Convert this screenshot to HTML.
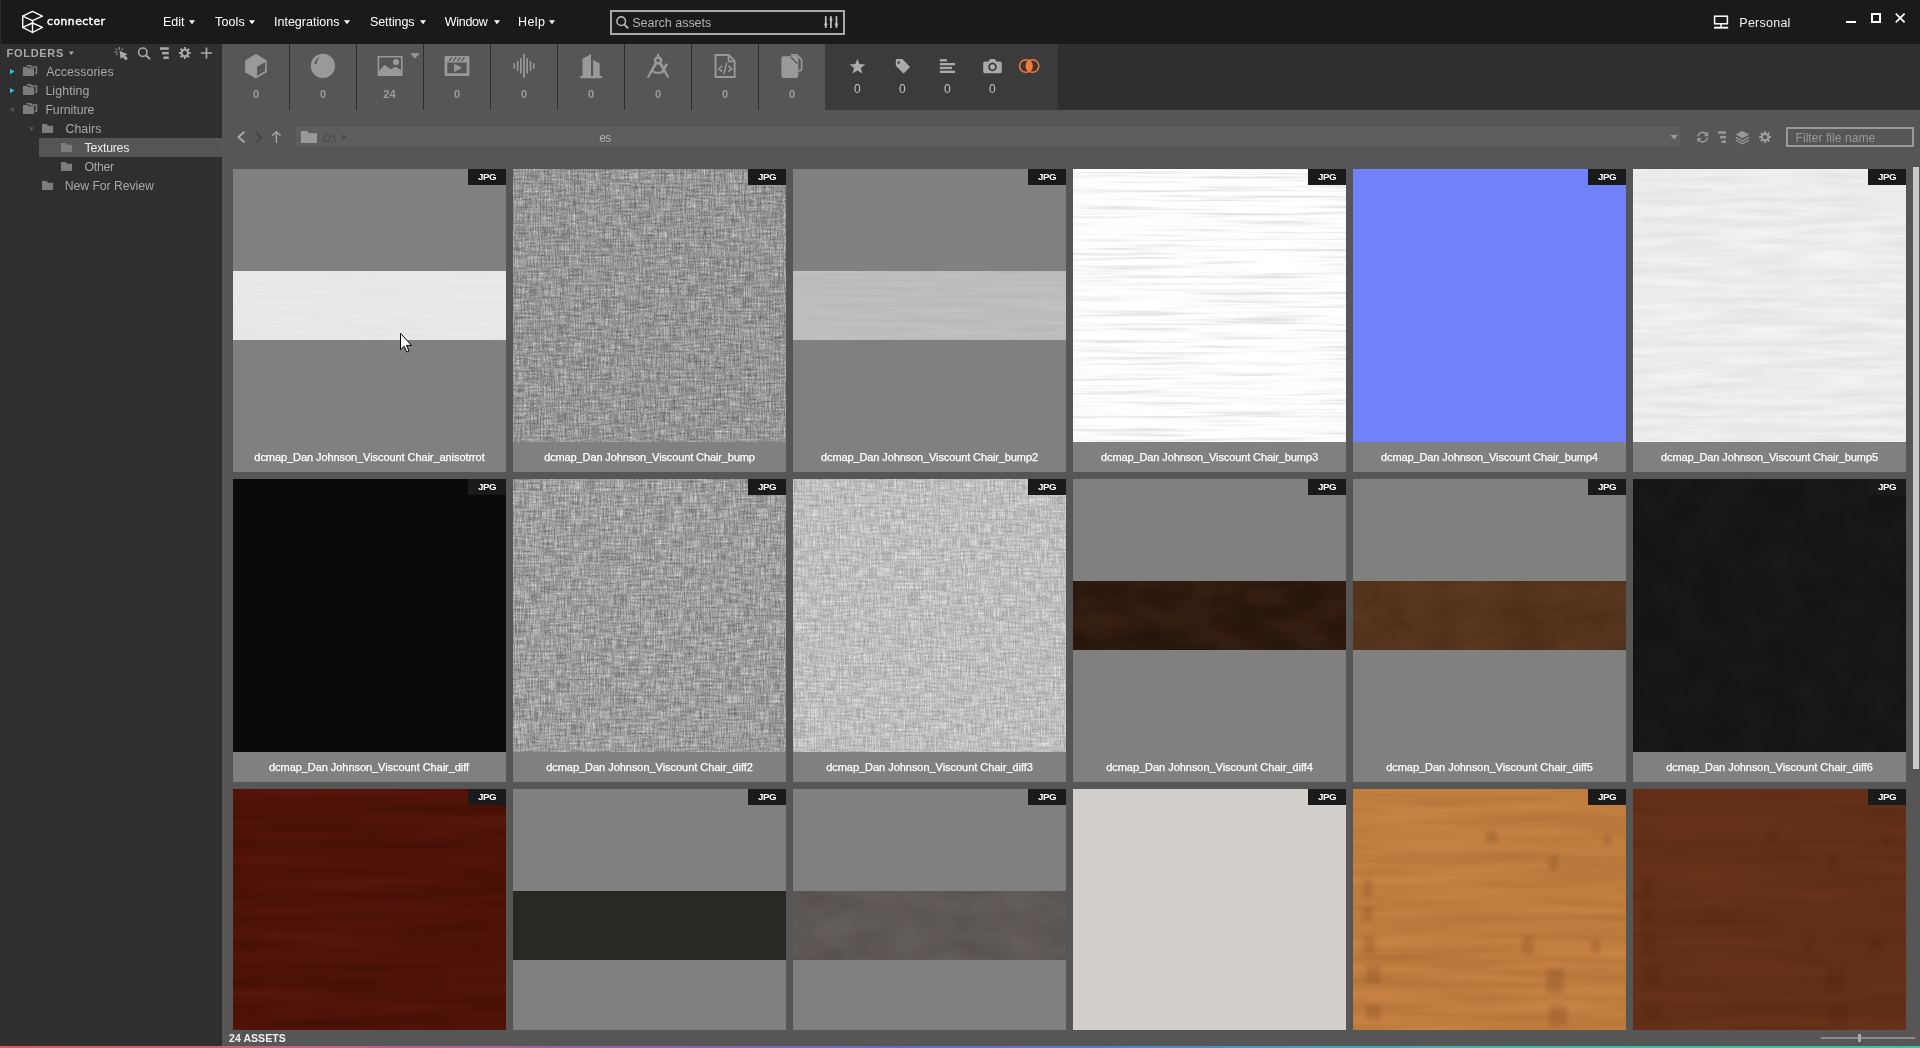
<!DOCTYPE html>
<html><head><meta charset="utf-8"><title>connecter</title><style>
*{margin:0;padding:0;box-sizing:border-box}
html,body{width:1920px;height:1048px;overflow:hidden;background:#565656;font-family:"Liberation Sans",sans-serif;color:#fff}
.a{position:absolute}
.t{position:absolute;white-space:nowrap;line-height:1}
#wrap{position:absolute;left:0;top:0;width:1920px;height:1048px;overflow:hidden;will-change:transform}
#top{left:0;top:0;width:1920px;height:44px;background:#1a1a1a}
#edge{left:0;top:0;width:1px;height:1046px;background:#2c2c2c}
#side{left:0;top:44px;width:222px;height:1002px;background:#2f2f2f}
#sel{left:39px;top:138px;width:183px;height:19px;background:#555}
#cats{left:222px;top:44px;width:603px;height:66px;background:#565656}
#filt{left:825px;top:44px;width:233px;height:66px;background:#3b3b3b}
#dark{left:1058px;top:44px;width:862px;height:66px;background:#2f2f2f}
.sep{position:absolute;top:44px;width:1px;height:66px;background:#2e2e2e}
#path{left:296px;top:127px;width:1384px;height:20px;background:#5d5d5d}
#fbox{left:1786px;top:127px;width:128px;height:20px;border:2px solid #9a9a9a;background:#565656}
#sb{left:1913px;top:167px;width:6px;height:602px;background:#c8c8c8}
.tile{position:absolute;width:273px;height:303px;background:#808080;overflow:hidden}
.tile .im{position:absolute;left:0;top:0;width:273px;height:273px}
.tile .band{position:absolute;left:0;top:102px;width:273px;height:69px}
.tile .bd{position:absolute;right:0;top:0;width:38px;height:16px;background:#1a1a1a}
.tile .lb{position:absolute;left:0;top:273px;width:273px;height:30px;background:#808080}
#grid{left:222px;top:110px;width:1698px;height:920px;overflow:hidden}
#status{left:222px;top:1030px;width:1698px;height:16px;background:#565656}
#grad{left:0;top:1046px;width:1920px;height:2px;background:linear-gradient(90deg,#f05060 0%,#d85a80 16%,#9060b0 33%,#6068d0 47%,#4a80d8 57%,#38a0c8 67%,#28c0b0 78%,#20d0a0 100%)}
</style></head><body>
<div id="wrap">
<svg width="0" height="0" style="position:absolute"><defs>
<filter id="fab1" x="0" y="0" width="100%" height="100%" color-interpolation-filters="sRGB">
<feTurbulence type="fractalNoise" baseFrequency="0.8 0.07" numOctaves="1" seed="3"/><feColorMatrix type="matrix" values="1 0 0 0 0  1 0 0 0 0  1 0 0 0 0  0 0 0 0 1" result="v"/>
<feTurbulence type="fractalNoise" baseFrequency="0.07 0.5" numOctaves="1" seed="8"/><feColorMatrix type="matrix" values="1 0 0 0 0  1 0 0 0 0  1 0 0 0 0  0 0 0 0 1" result="h"/>
<feTurbulence type="fractalNoise" baseFrequency="0.7 0.5" numOctaves="1" seed="5"/><feColorMatrix type="matrix" values="1 0 0 0 0  1 0 0 0 0  1 0 0 0 0  0 0 0 0 1" result="p"/>
<feComposite in="v" in2="h" operator="arithmetic" k1="0.6" k2="0.4" k3="0.3" k4="0" result="vh"/>
<feComposite in="vh" in2="p" operator="arithmetic" k1="0" k2="0.65" k3="0.35" k4="0"/>
<feColorMatrix type="matrix" values="0.85 0 0 0 0.160  0.85 0 0 0 0.160  0.85 0 0 0 0.160  0 0 0 0 1"/>
</filter>
<filter id="fab2" x="0" y="0" width="100%" height="100%" color-interpolation-filters="sRGB">
<feTurbulence type="fractalNoise" baseFrequency="0.8 0.07" numOctaves="1" seed="11"/><feColorMatrix type="matrix" values="1 0 0 0 0  1 0 0 0 0  1 0 0 0 0  0 0 0 0 1" result="v"/>
<feTurbulence type="fractalNoise" baseFrequency="0.07 0.5" numOctaves="1" seed="16"/><feColorMatrix type="matrix" values="1 0 0 0 0  1 0 0 0 0  1 0 0 0 0  0 0 0 0 1" result="h"/>
<feTurbulence type="fractalNoise" baseFrequency="0.7 0.5" numOctaves="1" seed="13"/><feColorMatrix type="matrix" values="1 0 0 0 0  1 0 0 0 0  1 0 0 0 0  0 0 0 0 1" result="p"/>
<feComposite in="v" in2="h" operator="arithmetic" k1="0.6" k2="0.4" k3="0.3" k4="0" result="vh"/>
<feComposite in="vh" in2="p" operator="arithmetic" k1="0" k2="0.65" k3="0.35" k4="0"/>
<feColorMatrix type="matrix" values="0.85 0 0 0 0.190  0.85 0 0 0 0.190  0.85 0 0 0 0.190  0 0 0 0 1"/>
</filter>
<filter id="fab3" x="0" y="0" width="100%" height="100%" color-interpolation-filters="sRGB">
<feTurbulence type="fractalNoise" baseFrequency="0.8 0.07" numOctaves="1" seed="23"/><feColorMatrix type="matrix" values="1 0 0 0 0  1 0 0 0 0  1 0 0 0 0  0 0 0 0 1" result="v"/>
<feTurbulence type="fractalNoise" baseFrequency="0.07 0.5" numOctaves="1" seed="28"/><feColorMatrix type="matrix" values="1 0 0 0 0  1 0 0 0 0  1 0 0 0 0  0 0 0 0 1" result="h"/>
<feTurbulence type="fractalNoise" baseFrequency="0.7 0.5" numOctaves="1" seed="25"/><feColorMatrix type="matrix" values="1 0 0 0 0  1 0 0 0 0  1 0 0 0 0  0 0 0 0 1" result="p"/>
<feComposite in="v" in2="h" operator="arithmetic" k1="0.6" k2="0.4" k3="0.3" k4="0" result="vh"/>
<feComposite in="vh" in2="p" operator="arithmetic" k1="0" k2="0.65" k3="0.35" k4="0"/>
<feColorMatrix type="matrix" values="0.62 0 0 0 0.435  0.62 0 0 0 0.435  0.62 0 0 0 0.435  0 0 0 0 1"/>
</filter>
<filter id="wl2" x="0" y="0" width="100%" height="100%" color-interpolation-filters="sRGB">
<feTurbulence type="fractalNoise" baseFrequency="0.01 0.25" numOctaves="3" seed="4"/>
<feColorMatrix type="matrix" values="0.06 0 0 0 0.711  0.06 0 0 0 0.711  0.06 0 0 0 0.711  0 0 0 0 1"/>
</filter>
<filter id="wl1" x="0" y="0" width="100%" height="100%" color-interpolation-filters="sRGB">
<feTurbulence type="fractalNoise" baseFrequency="0.01 0.25" numOctaves="3" seed="21"/>
<feColorMatrix type="matrix" values="0.035 0 0 0 0.892  0.035 0 0 0 0.892  0.035 0 0 0 0.892  0 0 0 0 1"/>
</filter>
<filter id="wl3" x="0" y="0" width="100%" height="100%" color-interpolation-filters="sRGB">
<feTurbulence type="fractalNoise" baseFrequency="0.008 0.3" numOctaves="3" seed="9"/>
<feColorMatrix type="matrix" values="1 0 0 0 0  1 0 0 0 0  1 0 0 0 0  0 0 0 0 1"/>
<feComponentTransfer><feFuncR type="table" tableValues="1 1 1 1 1 0.99 0.96 0.92 0.89 0.89 0.89"/><feFuncG type="table" tableValues="1 1 1 1 1 0.99 0.96 0.92 0.89 0.89 0.89"/><feFuncB type="table" tableValues="1 1 1 1 1 0.99 0.96 0.92 0.89 0.89 0.89"/></feComponentTransfer>
</filter>
<filter id="wl5" x="0" y="0" width="100%" height="100%" color-interpolation-filters="sRGB">
<feTurbulence type="fractalNoise" baseFrequency="0.012 0.14" numOctaves="3" seed="14"/>
<feColorMatrix type="matrix" values="0.1 0 0 0 0.875  0.1 0 0 0 0.875  0.1 0 0 0 0.875  0 0 0 0 1"/>
</filter>
<filter id="lth1" x="0" y="0" width="100%" height="100%" color-interpolation-filters="sRGB">
<feTurbulence type="fractalNoise" baseFrequency="0.02 0.04" numOctaves="4" seed="2"/>
<feColorMatrix type="matrix" values="0.1 0 0 0 0.130  0.07 0 0 0 0.067  0.04 0 0 0 0.035  0 0 0 0 1"/>
</filter>
<filter id="lth2" x="0" y="0" width="100%" height="100%" color-interpolation-filters="sRGB">
<feTurbulence type="fractalNoise" baseFrequency="0.02 0.04" numOctaves="4" seed="6"/>
<feColorMatrix type="matrix" values="0.08 0 0 0 0.293  0.06 0 0 0 0.170  0.04 0 0 0 0.090  0 0 0 0 1"/>
</filter>
<filter id="lth3" x="0" y="0" width="100%" height="100%" color-interpolation-filters="sRGB">
<feTurbulence type="fractalNoise" baseFrequency="0.02 0.04" numOctaves="4" seed="16"/>
<feColorMatrix type="matrix" values="0.08 0 0 0 0.329  0.08 0 0 0 0.305  0.08 0 0 0 0.297  0 0 0 0 1"/>
</filter>
<filter id="dk" x="0" y="0" width="100%" height="100%" color-interpolation-filters="sRGB">
<feTurbulence type="fractalNoise" baseFrequency="0.03 0.03" numOctaves="3" seed="12"/>
<feColorMatrix type="matrix" values="0.03 0 0 0 0.071  0.03 0 0 0 0.071  0.03 0 0 0 0.071  0 0 0 0 1"/>
</filter>
<filter id="wd1" x="0" y="0" width="100%" height="100%" color-interpolation-filters="sRGB">
<feTurbulence type="fractalNoise" baseFrequency="0.006 0.08" numOctaves="2" seed="5"/>
<feColorMatrix type="matrix" values="0.1 0 0 0 0.256  0.04 0 0 0 0.051  0.03 0 0 0 0.016  0 0 0 0 1"/>
</filter>
<filter id="wd2" x="0" y="0" width="100%" height="100%" color-interpolation-filters="sRGB">
<feTurbulence type="fractalNoise" baseFrequency="0.006 0.08" numOctaves="2" seed="7"/>
<feColorMatrix type="matrix" values="0.12 0 0 0 0.689  0.11 0 0 0 0.431  0.08 0 0 0 0.207  0 0 0 0 1"/>
</filter>
<filter id="wd3" x="0" y="0" width="100%" height="100%" color-interpolation-filters="sRGB">
<feTurbulence type="fractalNoise" baseFrequency="0.006 0.08" numOctaves="2" seed="13"/>
<feColorMatrix type="matrix" values="0.08 0 0 0 0.348  0.05 0 0 0 0.159  0.04 0 0 0 0.070  0 0 0 0 1"/>
</filter>
<filter id="bl" x="-20%" y="-20%" width="140%" height="140%"><feGaussianBlur stdDeviation="2"/></filter>
</defs></svg>
<div class="a" id="top"></div>
<div class="a" id="side"></div>
<div class="a" id="edge"></div>
<div class="a" id="sel"></div>
<div class="a" id="cats"></div><div class="a" id="filt"></div><div class="a" id="dark"></div>
<div class="sep" style="left:289px"></div>
<div class="sep" style="left:356px"></div>
<div class="sep" style="left:423px"></div>
<div class="sep" style="left:490px"></div>
<div class="sep" style="left:557px"></div>
<div class="sep" style="left:624px"></div>
<div class="sep" style="left:691px"></div>
<div class="sep" style="left:758px"></div>
<div class="a" id="path"></div><div class="a" id="fbox"></div>
<svg class="a" style="left:189.2px;top:20px" width="6" height="5"><path d="M0 .3h6L3 4.3z" fill="#fff"/></svg>
<svg class="a" style="left:249.4px;top:20px" width="6" height="5"><path d="M0 .3h6L3 4.3z" fill="#fff"/></svg>
<svg class="a" style="left:344.4px;top:20px" width="6" height="5"><path d="M0 .3h6L3 4.3z" fill="#fff"/></svg>
<svg class="a" style="left:419.5px;top:20px" width="6" height="5"><path d="M0 .3h6L3 4.3z" fill="#fff"/></svg>
<svg class="a" style="left:493.5px;top:20px" width="6" height="5"><path d="M0 .3h6L3 4.3z" fill="#fff"/></svg>
<svg class="a" style="left:549.3px;top:20px" width="6" height="5"><path d="M0 .3h6L3 4.3z" fill="#fff"/></svg>
<div class="a" style="left:610px;top:10px;width:235px;height:25px;border:2px solid #a8a8a8"></div>
<div class="a" id="grid">
<div class="tile" style="left:11px;top:59px"><div class="band" style="background:#e8e8e8"><svg width="273" height="69" style="display:block"><rect width="273" height="69" filter="url(#wl1)"/></svg></div><div class="bd"></div><div class="t" style="left:245.00px;top:2.80px;font-size:9.7px;color:#fff;font-weight:bold;letter-spacing:-0.475px">JPG</div><div class="lb"></div><div class="t" style="left:21.35px;top:282.80px;font-size:11px;color:#fff;letter-spacing:-0.072px;-webkit-text-stroke:0.25px #fff">dcmap_Dan Johnson_Viscount Chair_anisotrrot</div></div>
<div class="tile" style="left:291px;top:59px"><div class="im" style="background:#989898"><svg width="273" height="273" style="display:block"><rect width="273" height="273" filter="url(#fab1)"/></svg></div><div class="bd"></div><div class="t" style="left:245.00px;top:2.80px;font-size:9.7px;color:#fff;font-weight:bold;letter-spacing:-0.475px">JPG</div><div class="lb"></div><div class="t" style="left:31.15px;top:282.80px;font-size:11px;color:#fff;letter-spacing:-0.117px;-webkit-text-stroke:0.25px #fff">dcmap_Dan Johnson_Viscount Chair_bump</div></div>
<div class="tile" style="left:571px;top:59px"><div class="band" style="background:#bcbcbc"><svg width="273" height="69" style="display:block"><rect width="273" height="69" filter="url(#wl2)"/></svg></div><div class="bd"></div><div class="t" style="left:245.00px;top:2.80px;font-size:9.7px;color:#fff;font-weight:bold;letter-spacing:-0.475px">JPG</div><div class="lb"></div><div class="t" style="left:28.10px;top:282.80px;font-size:11px;color:#fff;letter-spacing:-0.115px;-webkit-text-stroke:0.25px #fff">dcmap_Dan Johnson_Viscount Chair_bump2</div></div>
<div class="tile" style="left:851px;top:59px"><div class="im" style="background:#f6f6f6"><svg width="273" height="273" style="display:block"><rect width="273" height="273" filter="url(#wl3)"/></svg></div><div class="bd"></div><div class="t" style="left:245.00px;top:2.80px;font-size:9.7px;color:#fff;font-weight:bold;letter-spacing:-0.475px">JPG</div><div class="lb"></div><div class="t" style="left:28.10px;top:282.80px;font-size:11px;color:#fff;letter-spacing:-0.115px;-webkit-text-stroke:0.25px #fff">dcmap_Dan Johnson_Viscount Chair_bump3</div></div>
<div class="tile" style="left:1131px;top:59px"><div class="im" style="background:#7182f9"></div><div class="bd"></div><div class="t" style="left:245.00px;top:2.80px;font-size:9.7px;color:#fff;font-weight:bold;letter-spacing:-0.475px">JPG</div><div class="lb"></div><div class="t" style="left:28.10px;top:282.80px;font-size:11px;color:#fff;letter-spacing:-0.115px;-webkit-text-stroke:0.25px #fff">dcmap_Dan Johnson_Viscount Chair_bump4</div></div>
<div class="tile" style="left:1411px;top:59px"><div class="im" style="background:#ececec"><svg width="273" height="273" style="display:block"><rect width="273" height="273" filter="url(#wl5)"/></svg></div><div class="bd"></div><div class="t" style="left:245.00px;top:2.80px;font-size:9.7px;color:#fff;font-weight:bold;letter-spacing:-0.475px">JPG</div><div class="lb"></div><div class="t" style="left:28.10px;top:282.80px;font-size:11px;color:#fff;letter-spacing:-0.115px;-webkit-text-stroke:0.25px #fff">dcmap_Dan Johnson_Viscount Chair_bump5</div></div>
<div class="tile" style="left:11px;top:369px"><div class="im" style="background:#0a0908"></div><div class="bd"></div><div class="t" style="left:245.00px;top:2.80px;font-size:9.7px;color:#fff;font-weight:bold;letter-spacing:-0.475px">JPG</div><div class="lb"></div><div class="t" style="left:36.05px;top:282.80px;font-size:11px;color:#fff;letter-spacing:-0.057px;-webkit-text-stroke:0.25px #fff">dcmap_Dan Johnson_Viscount Chair_diff</div></div>
<div class="tile" style="left:291px;top:369px"><div class="im" style="background:#a0a0a0"><svg width="273" height="273" style="display:block"><rect width="273" height="273" filter="url(#fab2)"/></svg></div><div class="bd"></div><div class="t" style="left:245.00px;top:2.80px;font-size:9.7px;color:#fff;font-weight:bold;letter-spacing:-0.475px">JPG</div><div class="lb"></div><div class="t" style="left:33.20px;top:282.80px;font-size:11px;color:#fff;letter-spacing:-0.038px;-webkit-text-stroke:0.25px #fff">dcmap_Dan Johnson_Viscount Chair_diff2</div></div>
<div class="tile" style="left:571px;top:369px"><div class="im" style="background:#c2c2c2"><svg width="273" height="273" style="display:block"><rect width="273" height="273" filter="url(#fab3)"/></svg></div><div class="bd"></div><div class="t" style="left:245.00px;top:2.80px;font-size:9.7px;color:#fff;font-weight:bold;letter-spacing:-0.475px">JPG</div><div class="lb"></div><div class="t" style="left:33.20px;top:282.80px;font-size:11px;color:#fff;letter-spacing:-0.038px;-webkit-text-stroke:0.25px #fff">dcmap_Dan Johnson_Viscount Chair_diff3</div></div>
<div class="tile" style="left:851px;top:369px"><div class="band" style="background:#2e1a0e"><svg width="273" height="69" style="display:block"><rect width="273" height="69" filter="url(#lth1)"/></svg></div><div class="bd"></div><div class="t" style="left:245.00px;top:2.80px;font-size:9.7px;color:#fff;font-weight:bold;letter-spacing:-0.475px">JPG</div><div class="lb"></div><div class="t" style="left:33.20px;top:282.80px;font-size:11px;color:#fff;letter-spacing:-0.038px;-webkit-text-stroke:0.25px #fff">dcmap_Dan Johnson_Viscount Chair_diff4</div></div>
<div class="tile" style="left:1131px;top:369px"><div class="band" style="background:#55331c"><svg width="273" height="69" style="display:block"><rect width="273" height="69" filter="url(#lth2)"/></svg></div><div class="bd"></div><div class="t" style="left:245.00px;top:2.80px;font-size:9.7px;color:#fff;font-weight:bold;letter-spacing:-0.475px">JPG</div><div class="lb"></div><div class="t" style="left:33.20px;top:282.80px;font-size:11px;color:#fff;letter-spacing:-0.038px;-webkit-text-stroke:0.25px #fff">dcmap_Dan Johnson_Viscount Chair_diff5</div></div>
<div class="tile" style="left:1411px;top:369px"><div class="im" style="background:#161616"><svg width="273" height="273" style="display:block"><rect width="273" height="273" filter="url(#dk)"/></svg></div><div class="bd"></div><div class="t" style="left:245.00px;top:2.80px;font-size:9.7px;color:#fff;font-weight:bold;letter-spacing:-0.475px">JPG</div><div class="lb"></div><div class="t" style="left:33.20px;top:282.80px;font-size:11px;color:#fff;letter-spacing:-0.038px;-webkit-text-stroke:0.25px #fff">dcmap_Dan Johnson_Viscount Chair_diff6</div></div>
<div class="tile" style="left:11px;top:679px"><div class="im" style="background:#4c1207"><svg width="273" height="273" style="display:block"><rect width="273" height="273" filter="url(#wd1)"/><g fill="#3a0a00" opacity=".13" filter="url(#bl)"><rect x="10" y="90" width="9" height="18" rx="2"/><rect x="10" y="117" width="9" height="15" rx="2"/><rect x="10" y="147" width="12" height="18" rx="2"/><rect x="13" y="177" width="15" height="18" rx="2"/><rect x="13" y="216" width="15" height="15" rx="2"/><rect x="169" y="147" width="12" height="18" rx="2"/><rect x="196" y="66" width="9" height="15" rx="2"/><rect x="193" y="180" width="18" height="24" rx="2"/><rect x="196" y="216" width="18" height="21" rx="2"/><rect x="251" y="45" width="6" height="12" rx="2"/><rect x="238" y="150" width="9" height="15" rx="2"/><rect x="133" y="42" width="12" height="12" rx="2"/></g></svg></div><div class="bd"></div><div class="t" style="left:245.00px;top:2.80px;font-size:9.7px;color:#fff;font-weight:bold;letter-spacing:-0.475px">JPG</div></div>
<div class="tile" style="left:291px;top:679px"><div class="band" style="background:#282825"></div><div class="bd"></div><div class="t" style="left:245.00px;top:2.80px;font-size:9.7px;color:#fff;font-weight:bold;letter-spacing:-0.475px">JPG</div></div>
<div class="tile" style="left:571px;top:679px"><div class="band" style="background:#5e5856"><svg width="273" height="69" style="display:block"><rect width="273" height="69" filter="url(#lth3)"/></svg></div><div class="bd"></div><div class="t" style="left:245.00px;top:2.80px;font-size:9.7px;color:#fff;font-weight:bold;letter-spacing:-0.475px">JPG</div></div>
<div class="tile" style="left:851px;top:679px"><div class="im" style="background:#d2ceca"></div><div class="bd"></div><div class="t" style="left:245.00px;top:2.80px;font-size:9.7px;color:#fff;font-weight:bold;letter-spacing:-0.475px">JPG</div></div>
<div class="tile" style="left:1131px;top:679px"><div class="im" style="background:#bd7c42"><svg width="273" height="273" style="display:block"><rect width="273" height="273" filter="url(#wd2)"/><g fill="#3a0a00" opacity=".13" filter="url(#bl)"><rect x="10" y="90" width="9" height="18" rx="2"/><rect x="10" y="117" width="9" height="15" rx="2"/><rect x="10" y="147" width="12" height="18" rx="2"/><rect x="13" y="177" width="15" height="18" rx="2"/><rect x="13" y="216" width="15" height="15" rx="2"/><rect x="169" y="147" width="12" height="18" rx="2"/><rect x="196" y="66" width="9" height="15" rx="2"/><rect x="193" y="180" width="18" height="24" rx="2"/><rect x="196" y="216" width="18" height="21" rx="2"/><rect x="251" y="45" width="6" height="12" rx="2"/><rect x="238" y="150" width="9" height="15" rx="2"/><rect x="133" y="42" width="12" height="12" rx="2"/></g></svg></div><div class="bd"></div><div class="t" style="left:245.00px;top:2.80px;font-size:9.7px;color:#fff;font-weight:bold;letter-spacing:-0.475px">JPG</div></div>
<div class="tile" style="left:1411px;top:679px"><div class="im" style="background:#5f2f17"><svg width="273" height="273" style="display:block"><rect width="273" height="273" filter="url(#wd3)"/><g fill="#3a0a00" opacity=".13" filter="url(#bl)"><rect x="10" y="90" width="9" height="18" rx="2"/><rect x="10" y="117" width="9" height="15" rx="2"/><rect x="10" y="147" width="12" height="18" rx="2"/><rect x="13" y="177" width="15" height="18" rx="2"/><rect x="13" y="216" width="15" height="15" rx="2"/><rect x="169" y="147" width="12" height="18" rx="2"/><rect x="196" y="66" width="9" height="15" rx="2"/><rect x="193" y="180" width="18" height="24" rx="2"/><rect x="196" y="216" width="18" height="21" rx="2"/><rect x="251" y="45" width="6" height="12" rx="2"/><rect x="238" y="150" width="9" height="15" rx="2"/><rect x="133" y="42" width="12" height="12" rx="2"/></g></svg></div><div class="bd"></div><div class="t" style="left:245.00px;top:2.80px;font-size:9.7px;color:#fff;font-weight:bold;letter-spacing:-0.475px">JPG</div></div>
</div>
<div class="a" id="sb"></div>
<div class="a" id="status"></div>
<div class="a" style="left:1821px;top:1037px;width:94px;height:2px;background:#8c8c8c"></div>
<div class="a" style="left:1858px;top:1034px;width:3px;height:8px;background:#a8a8a8"></div>
<div class="a" id="grad"></div>
<div class="t" style="left:163.00px;top:16.00px;font-size:12.5px;color:#fff;letter-spacing:-0.022px">Edit</div>
<div class="t" style="left:215.00px;top:16.00px;font-size:12.5px;color:#fff;letter-spacing:0.142px">Tools</div>
<div class="t" style="left:273.90px;top:16.00px;font-size:12.5px;color:#fff;letter-spacing:0.030px">Integrations</div>
<div class="t" style="left:370.00px;top:16.00px;font-size:12.5px;color:#fff;letter-spacing:-0.088px">Settings</div>
<div class="t" style="left:444.70px;top:16.00px;font-size:12.5px;color:#fff;letter-spacing:-0.266px">Window</div>
<div class="t" style="left:518.00px;top:16.00px;font-size:12.5px;color:#fff;letter-spacing:0.381px">Help</div>
<div class="t" style="left:47.00px;top:16.80px;font-size:10.8px;color:#fff;font-family:'DejaVu Sans', sans-serif;letter-spacing:0.477px;-webkit-text-stroke:0.45px #fff">connecter</div>
<div class="t" style="left:632.30px;top:17.00px;font-size:12.5px;color:#b4b4b4;letter-spacing:-0.021px">Search assets</div>
<div class="t" style="left:1739.30px;top:16.80px;font-size:12.5px;color:#f0f0f0;letter-spacing:0.249px">Personal</div>
<div class="t" style="left:6.50px;top:47.70px;font-size:11px;color:#a8a8a8;font-weight:bold;letter-spacing:0.713px">FOLDERS</div>
<div class="t" style="left:46.20px;top:65.70px;font-size:12.3px;color:#a8a8a8;letter-spacing:0.106px">Accessories</div>
<div class="t" style="left:45.40px;top:84.70px;font-size:12.3px;color:#a8a8a8;letter-spacing:0.138px">Lighting</div>
<div class="t" style="left:45.40px;top:103.70px;font-size:12.3px;color:#a8a8a8;letter-spacing:-0.033px">Furniture</div>
<div class="t" style="left:65.50px;top:122.70px;font-size:12.3px;color:#a8a8a8;letter-spacing:0.063px">Chairs</div>
<div class="t" style="left:84.60px;top:141.70px;font-size:12.3px;color:#eaeaea;letter-spacing:-0.246px">Textures</div>
<div class="t" style="left:84.60px;top:160.70px;font-size:12.3px;color:#a8a8a8;letter-spacing:-0.315px">Other</div>
<div class="t" style="left:64.70px;top:179.70px;font-size:12.3px;color:#a8a8a8;letter-spacing:-0.078px">New For Review</div>
<div class="t" style="left:252.90px;top:88.90px;font-size:11px;color:#9c9c9c;font-weight:bold">0</div>
<div class="t" style="left:319.90px;top:88.90px;font-size:11px;color:#9c9c9c;font-weight:bold">0</div>
<div class="t" style="left:383.34px;top:88.90px;font-size:11px;color:#9c9c9c;font-weight:bold">24</div>
<div class="t" style="left:453.90px;top:88.90px;font-size:11px;color:#9c9c9c;font-weight:bold">0</div>
<div class="t" style="left:520.90px;top:88.90px;font-size:11px;color:#9c9c9c;font-weight:bold">0</div>
<div class="t" style="left:587.90px;top:88.90px;font-size:11px;color:#9c9c9c;font-weight:bold">0</div>
<div class="t" style="left:654.90px;top:88.90px;font-size:11px;color:#9c9c9c;font-weight:bold">0</div>
<div class="t" style="left:721.90px;top:88.90px;font-size:11px;color:#9c9c9c;font-weight:bold">0</div>
<div class="t" style="left:788.90px;top:88.90px;font-size:11px;color:#9c9c9c;font-weight:bold">0</div>
<div class="t" style="left:853.90px;top:82.80px;font-size:12px;color:#c4c4c4">0</div>
<div class="t" style="left:898.93px;top:82.80px;font-size:12px;color:#c4c4c4">0</div>
<div class="t" style="left:943.96px;top:82.80px;font-size:12px;color:#c4c4c4">0</div>
<div class="t" style="left:988.99px;top:82.80px;font-size:12px;color:#c4c4c4">0</div>
<div class="t" style="left:322.80px;top:132.70px;font-size:11.5px;color:#4a4a4a;letter-spacing:-0.650px">D:\</div>
<div class="t" style="left:599.30px;top:131.70px;font-size:12px;color:#b0b0b0;letter-spacing:-0.674px">es</div>
<div class="t" style="left:1795.50px;top:131.70px;font-size:12px;color:#989898;letter-spacing:0.065px">Filter file name</div>
<div class="t" style="left:229.00px;top:1032.60px;font-size:10.5px;color:#f0f0f0;font-weight:bold;letter-spacing:0.062px">24 ASSETS</div>
<svg class="a" style="left:0;top:0" width="1920" height="1048" viewBox="0 0 1920 1048">
<!-- logo -->
<g fill="none" stroke="#fff" stroke-width="1.4" stroke-linejoin="round" stroke-linecap="round">
<path d="M32.5 11.4 L42.4 16.1 L32.5 20.6 L22.7 16.1 Z"/>
<path d="M22.7 16.1 V27.4 L32.5 32.5 L42.4 27.4 L32.5 23"/>
<path d="M22.7 27.4 L32.5 23 M32.5 20.6 V32.5"/>
</g>
<!-- search box icon -->
<g fill="none" stroke="#b0b0b0" stroke-width="1.6" stroke-linecap="round">
<circle cx="621.2" cy="21.2" r="4.3"/><path d="M624.4 24.6 L627.6 27.8" stroke-width="2"/>
</g>
<!-- sliders -->
<g fill="#c0c0c0">
<rect x="824.9" y="16.2" width="1.7" height="11.8"/><rect x="830.1" y="16.2" width="1.7" height="11.8"/><rect x="835.6" y="16.2" width="1.7" height="11.8"/>
<path d="M823.7 24.2h4.1l-2.05 2.6zM823.7 24.4h4.1l-2.05-2zM828.9 19.8h4.1l-2.05-2.6zM828.9 19.6h4.1l-2.05 2zM834.4 24.2h4.1l-2.05 2.6zM834.4 24.4h4.1l-2.05-2z"/>
</g>
<!-- monitor -->
<g fill="none" stroke="#fff" stroke-width="1.5">
<rect x="1714.6" y="16.2" width="12.8" height="7.6"/>
<path d="M1721 24 V27" />
<path d="M1714 27.7 H1728.2" stroke-width="1.9"/>
</g>
<!-- window controls -->
<rect x="1846" y="21" width="10" height="2" fill="#fff"/>
<rect x="1872" y="14" width="8" height="8" fill="none" stroke="#fff" stroke-width="2"/>
<path d="M1895.8 13.6 L1904.6 22.4 M1904.6 13.6 L1895.8 22.4" stroke="#fff" stroke-width="1.7" fill="none"/>
<!-- sidebar header tools -->
<path d="M68.8 51.4h5l-2.5 3.5z" fill="#a8a8a8"/>
<g fill="#a8a8a8" stroke="none">
<path d="M119.6 50.8 L120.6 59 L122.7 57 L125.6 60.4 L127.9 58.5 L125 55.3 L127.6 54.2 Z"/>
</g>
<g stroke="#a8a8a8" stroke-width="1" fill="none" stroke-linecap="round">
<path d="M119.3 47.4 V49.3 M116 48.6 L117.4 50 M115 52 H116.9 M122.6 48.6 L121.6 49.8 M116.3 54.8 L117.4 53.8"/>
</g>
<g fill="none" stroke="#a8a8a8" stroke-width="1.6" stroke-linecap="round">
<circle cx="142.8" cy="52.2" r="4.2"/><path d="M146 55.4 L149.4 58.6" stroke-width="2"/>
</g>
<g fill="#a8a8a8">
<rect x="160" y="47.3" width="8.8" height="2.5"/><rect x="162" y="51.9" width="6.8" height="2.5"/><rect x="163.3" y="56.5" width="5.5" height="2.5"/>
</g>
<g id="gear1" transform="translate(184.8 53)">
<path fill="#a8a8a8" fill-rule="nonzero" d="M-1.03 -3.87 L-1.02 -5.91 L1.02 -5.91 L1.03 -3.87z M2.01 -3.46 L3.46 -4.90 L4.90 -3.46 L3.46 -2.01z M3.87 -1.03 L5.91 -1.02 L5.91 1.02 L3.87 1.03z M3.46 2.01 L4.90 3.46 L3.46 4.90 L2.01 3.46z M1.03 3.87 L1.02 5.91 L-1.02 5.91 L-1.03 3.87z M-2.01 3.46 L-3.46 4.90 L-4.90 3.46 L-3.46 2.01z M-3.87 1.03 L-5.91 1.02 L-5.91 -1.02 L-3.87 -1.03z M-3.46 -2.01 L-4.90 -3.46 L-3.46 -4.90 L-2.01 -3.46z M0 -4.3 a4.3 4.3 0 1 1 -0.001 0z M0 -2.2 a2.2 2.2 0 1 0 0.001 0z"/>
</g>
<path d="M200.900 53 H212.100 M206.500 47.400 V58.600" stroke="#a8a8a8" stroke-width="1.700" fill="none"/>
<!-- tree arrows -->
<path d="M10 68.900 L14.600 71.500 L10 74.200z M10 87.900 L14.600 90.500 L10 93.200z" fill="#35bfe0"/>
<path d="M9.800 108.200h5.200l-2.600 3.800z M28.800 127.200h5.200l-2.600 3.800z" fill="#565656"/>
<!-- folder icons (double) -->
<g id="df" fill="#7c7c7c">
<path d="M22.900 67h4.600l1.200 1.300h5.300v7.700h-11.100z"/>
<path d="M26.700 66 v-1h4.200l1.300 1.300h5v7.700h-2.400v-1.500h.9v-4.700h-5.200l-1.300-1.400h-1.400z" />
</g>
<use href="#df" y="19"/><use href="#df" y="38"/>
<g id="sf" fill="#7c7c7c"><path d="M42 124.100h4.700l1.300 1.700h5.100v7.200h-11.100z"/></g>
<use href="#sf" x="19" y="19"/><use href="#sf" x="19" y="38"/><use href="#sf" x="0" y="57"/>


<!-- category icons -->
<g fill="#999">
<!-- cube -->
<path d="M256 53.7 L266.7 60.6 V72.3 L256 78.6 L245.100 72.3 V60.6 Z"/>
<path d="M257.100 66.800 L265.100 62.200 V71 L257.100 76 Z" fill="#565656"/>
<!-- sphere -->
<circle cx="322.900" cy="65.900" r="12.100"/>
<path d="M319.600 56.700 Q315.300 59.300 314.300 63.700 L316.600 64 Q317 59.500 319.600 56.700Z" fill="#565656"/>
<!-- image -->
<path fill-rule="evenodd" d="M377.600 56h25v20h-25z M379.200 57.600v16.800h21.800v-16.800z"/>
<path d="M378.800 71.200 L384.600 65 L390.800 69.200 L395.400 66.700 L401.600 70.600 V75h-22.800z"/>
<circle cx="396" cy="62" r="3.100"/>
<path d="M410 53.300h9.800l-4.900 5.200z"/>
<!-- video -->
<path fill-rule="evenodd" d="M445.600 56h22.800q1 0 1 1v18q0 1-1 1h-22.800q-1 0-1-1v-18q0-1 1-1z M447.300 62.400v10.800h19.400v-10.800z"/>
<path d="M454.100 63.800 L462.100 67.800 L454.100 72z"/>
<g stroke="#565656" stroke-width="1.100"><path d="M449 61.200 L452 57.200 M453.200 61.200 L456.200 57.200 M457.400 61.200 L460.400 57.200 M461.600 61.200 L464.600 57.200"/></g>
<!-- audio -->
<g>
<rect x="513.450" y="62.900" width="1.600" height="6" rx=".8"/><rect x="516.800" y="61" width="1.600" height="10" rx=".8"/><rect x="520" y="57.900" width="1.600" height="16" rx=".8"/><rect x="523.200" y="53.800" width="1.700" height="24.200" rx=".8"/><rect x="526.400" y="57.900" width="1.600" height="16" rx=".8"/><rect x="529.700" y="61" width="1.600" height="10" rx=".8"/><rect x="532.950" y="62.900" width="1.600" height="6" rx=".8"/>
</g>
<!-- buildings -->
<path d="M582.500 58.800 L591 54.100 V76 h-8.500z M593.100 60 L599.700 63.500 V76 h-6.600z M580.300 76 h21.600 v2.200 h-21.600z"/>
<!-- compass -->
<rect x="657" y="53.900" width="2.200" height="2.600"/>
<path fill-rule="evenodd" d="M658.100 56.100 a4.300 4.300 0 1 0 0.001 0z M658.100 58.700 a1.700 1.700 0 1 1 -0.001 0z"/>
<path d="M654.600 62.800 L657.200 64 L649 77.600 L647.200 78.300 L647.300 76.400z"/>
<path d="M661.600 62.800 L659 64 L667.200 77.600 L669 78.300 L668.900 76.400z"/>
<path d="M665.600 63.300 L668 64.300 L662.700 73.500 L660.700 72.400z"/>
<path d="M651.300 69.600 Q658.100 74.300 664.900 69.600 L665.900 71.300 Q658.100 76.600 650.300 71.300z"/>
<!-- code file -->
<path fill-rule="evenodd" d="M714.600 54.100 h14.600 l6.400 6.600 v17.200 h-21z M716.500 56 v20 h17.200 v-13.800 h-6 v-6.200z M729.400 57 v3.400 h3.400z"/>
<g fill="none" stroke="#999" stroke-width="1.500"><path d="M722.200 65.800 L718.700 68.700 L722.200 71.600 M728.300 65.800 L731.800 68.700 L728.300 71.600 M726.500 63.200 L724 74.200"/></g>
<!-- copy -->
<rect x="781.400" y="56.300" width="16.900" height="21.600" rx="2"/>
<path fill="none" stroke="#999" stroke-width="1.700" d="M790.800 54.900 h6 l4.800 4.800 v9.700 q0 1.200 -1.200 1.200 h-2.600"/>
<path fill="none" stroke="#565656" stroke-width="1.400" d="M791 57.300 L797.200 63.500"/>
<path d="M791.200 55.800 l5.600 0 l0 5.600z" fill="#999"/>
</g>
<!-- filter panel icons -->
<g fill="#aaa">
<path d="M857.400 58.900 L859.500 64.100 L865.300 64.500 L860.800 68.100 L862.300 73.600 L857.400 70.500 L852.500 73.600 L854 68.100 L849.500 64.500 L855.300 64.100z"/>
<path fill-rule="evenodd" d="M896.600 59.100 h5.800 l7.200 7.300 q.5 .6 0 1.200 l-5.400 5.500 q-.6 .5 -1.200 0 l-7.200 -7.300 v-5.900 q0 -.8 .8 -.8z M898.700 61.200 a1.300 1.300 0 1 0 0.001 0z"/>
<rect x="939.800" y="59.100" width="7.100" height="2.400"/><rect x="939.800" y="63" width="15.300" height="2.300"/><rect x="939.800" y="66.800" width="12.200" height="2.300"/><rect x="939.800" y="70.600" width="15.300" height="2.400"/>
<path fill-rule="evenodd" d="M985 61.500 h3.600 l1.500 -2.400 h4.800 l1.500 2.400 h3.600 q1.800 0 1.800 1.800 v8.100 q0 1.800 -1.800 1.800 h-15 q-1.800 0 -1.800 -1.800 v-8.100 q0 -1.800 1.800 -1.800z M992.500 62.600 a4.300 4.300 0 1 0 0.001 0z M992.500 64.300 a2.600 2.600 0 1 1 -0.001 0z"/>
</g>
<g fill="#46342b" stroke="none"><circle cx="1025.9" cy="66.0" r="6.3"/><circle cx="1032.5" cy="66.0" r="6.3"/></g>
<path d="M1029.20 60.63 A6.3 6.3 0 0 1 1029.20 71.37 A6.3 6.3 0 0 1 1029.20 60.63z" fill="#f47a3c"/>
<g fill="none" stroke="#f47a3c" stroke-width="1.500"><circle cx="1025.9" cy="66.0" r="6.3"/><circle cx="1032.5" cy="66.0" r="6.3"/></g>
<!-- path bar icons -->
<path d="M244.500 131.700 L238.400 137 L244.500 142.300" fill="none" stroke="#a8a8a8" stroke-width="2"/>
<path d="M256.800 132.300 L260.600 137.500 L256.800 142.700" fill="none" stroke="#454545" stroke-width="2"/>
<path d="M276.400 143 V131.800 M272.300 135.800 L276.400 131.600 L280.500 135.800" fill="none" stroke="#a8a8a8" stroke-width="1.300"/>
<path d="M300.900 131 h6.200 l1.800 2.300 h8.100 v9.700 h-16.100z" fill="#999"/>
<path d="M342.500 134.200 L346.600 137.100 L342.500 140z" fill="#484848"/>
<path d="M1670.200 135 h7.800 l-3.900 4.800z" fill="#999"/>
<!-- refresh -->
<g fill="none" stroke="#999" stroke-width="1.600">
<path d="M1698 136.300 A4.900 4.900 0 0 1 1706.600 134.200"/><path d="M1707.500 137.900 A4.900 4.900 0 0 1 1698.900 140"/>
</g>
<path d="M1708.300 131.600 v4.600 h-4.600z M1697.200 142.600 v-4.600 h4.600z" fill="#999"/>
<g fill="#999">
<rect x="1718" y="131.300" width="8" height="2.400"/><rect x="1720" y="135.900" width="6" height="2.500"/><rect x="1721.400" y="140.500" width="4.600" height="2.500"/>
<path d="M1742.400 130.900 L1749.200 134.600 L1742.400 138.300 L1735.600 134.600z"/>
</g>
<g fill="none" stroke="#999" stroke-width="1.300"><path d="M1735.800 137.400 L1742.400 141 L1749 137.400 M1735.800 140.200 L1742.400 143.800 L1749 140.200"/></g>
<use href="#gear1" x="1580.300" y="84.100" style="opacity:.9"/>
<!-- mouse cursor -->
<path d="M400.500 333.300 V349.700 L404.200 346.200 L406.800 352 L409 351 L406.500 345.400 L411.500 345.400z" fill="#fff" stroke="#000" stroke-width="1" stroke-linejoin="miter"/>
</svg>

</div>
</body></html>
